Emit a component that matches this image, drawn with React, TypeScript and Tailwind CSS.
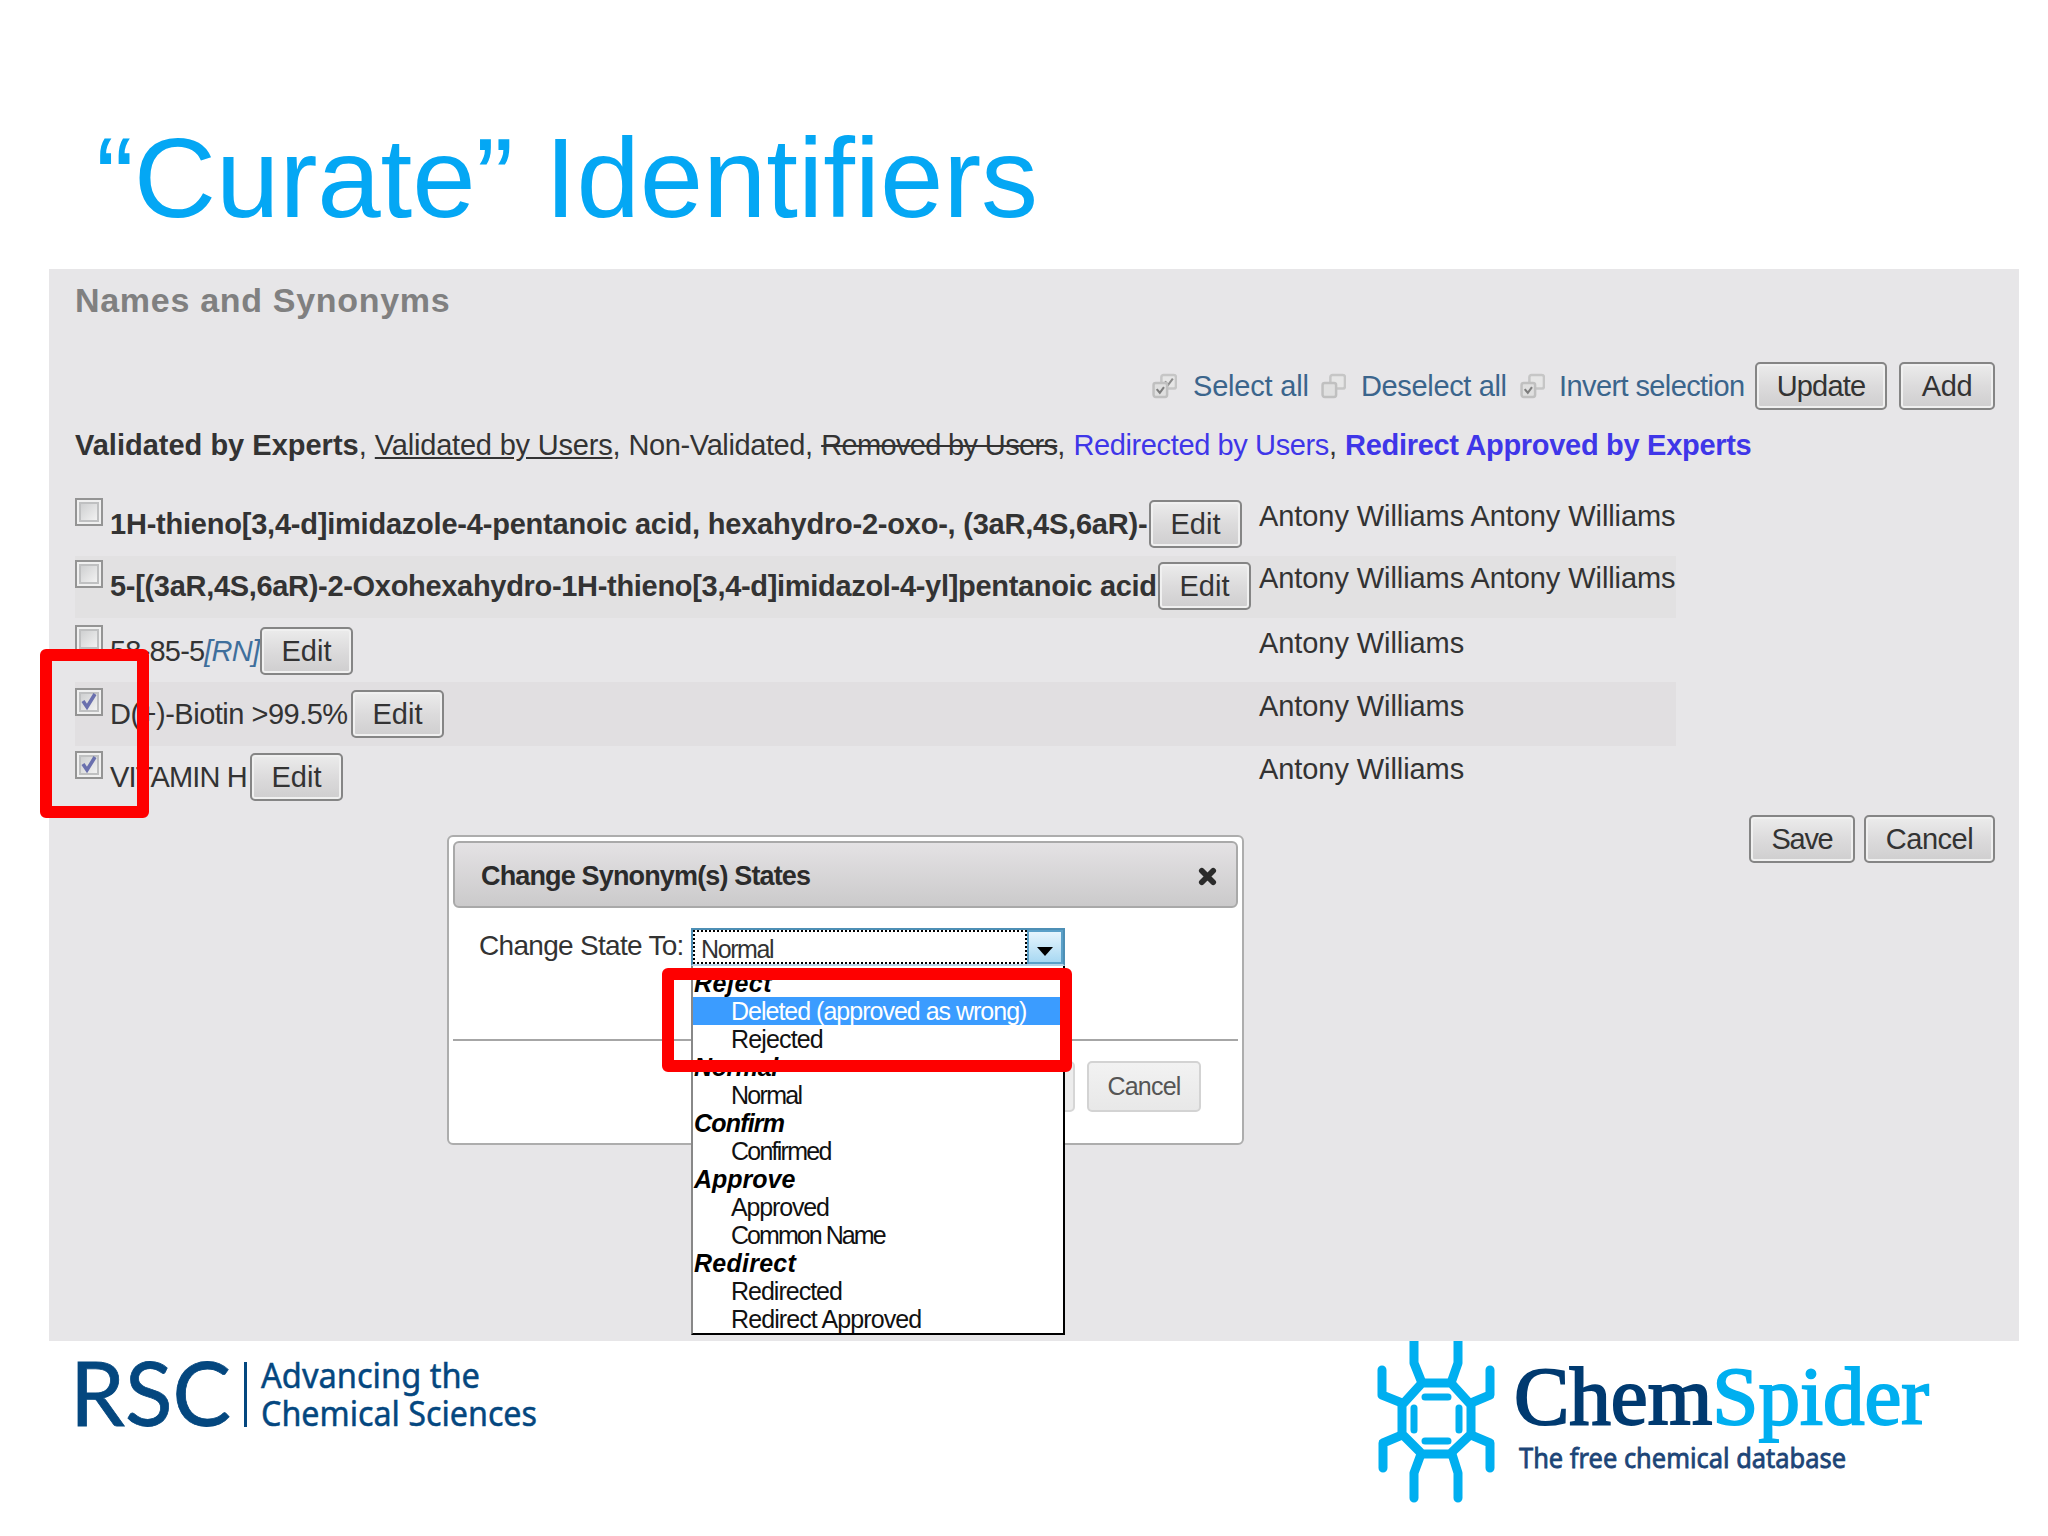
import React from "react";

const sans = "font-['Liberation_Sans',Arial,sans-serif]";

interface ButtonProps {
  label: string;
  className?: string;
}

function Button({ label, className = "" }: ButtonProps) {
  return (
    <button
      className={`h-[48px] shrink-0 rounded-[5px] border-2 border-[#858585] bg-linear-to-b from-[#ececec] via-[#dcdbdc] to-[#cfcecf] text-[29px] leading-[45px] text-[#333] shadow-[inset_0_0_0_2px_#f0f0f0] ${className}`}
    >
      {label}
    </button>
  );
}

function Checkbox({ checked }: { checked?: boolean }) {
  return (
    <span className="block h-[28px] w-[28px] shrink-0 border-2 border-[#949494] bg-[#f0f0f0] p-[2px]">
      <span className="block h-full w-full border-2 border-[#bfc0c1] bg-linear-to-br from-[#cfd0d1] to-[#f2f2f2]">
        {checked && (
          <svg viewBox="0 0 16 16" className="h-full w-full overflow-visible">
            <path d="M2 7 L6 13 L14 0" fill="none" stroke="#6a70ae" strokeWidth="3.6" />
          </svg>
        )}
      </span>
    </span>
  );
}

interface SelectIconProps {
  front?: boolean;
  back?: boolean;
}

function SelectIcon({ front, back }: SelectIconProps) {
  return (
    <svg viewBox="0 0 24 24" className="h-[26px] w-[25px] shrink-0">
      <rect x="9" y="1.5" width="14" height="13" rx="2" fill="#e6e6e6" stroke="#c6c6c6" strokeWidth="2.4" />
      {back && <path d="M12.5 7.5 L15.5 11 L20 5" fill="none" stroke="#8b8b8b" strokeWidth="2" />}
      <rect x="1.5" y="9" width="13" height="13.5" rx="2" fill="#e0e0e0" stroke="#c0c0c0" strokeWidth="2.4" />
      {front && <path d="M4.5 15 L7.5 18.5 L11.5 13" fill="none" stroke="#7d7d7d" strokeWidth="2" />}
    </svg>
  );
}

interface Synonym {
  name: React.ReactNode;
  owner: string;
  textClass: string;
  rowClass: string;
  checked?: boolean;
}

const synonyms: Synonym[] = [
  {
    name: "1H-thieno[3,4-d]imidazole-4-pentanoic acid, hexahydro-2-oxo-, (3aR,4S,6aR)-",
    owner: "Antony Williams Antony Williams",
    textClass: "w-[1039px] font-bold tracking-[-0.22px]",
    rowClass: "h-[63px] pt-[5px]",
  },
  {
    name: "5-[(3aR,4S,6aR)-2-Oxohexahydro-1H-thieno[3,4-d]imidazol-4-yl]pentanoic acid",
    owner: "Antony Williams Antony Williams",
    textClass: "w-[1048px] font-bold tracking-[-0.31px]",
    rowClass: "h-[62px] bg-[#e2e1e2] pt-[4px]",
  },
  {
    name: (
      <>
        58-85-5<i className="text-[#3f6f9c]">[RN]</i>
      </>
    ),
    owner: "Antony Williams",
    textClass: "w-[150px] tracking-[-0.8px]",
    rowClass: "h-[64px] pt-[7px]",
  },
  {
    name: "D(+)-Biotin >99.5%",
    owner: "Antony Williams",
    textClass: "w-[241px] tracking-[-0.5px]",
    rowClass: "h-[64px] bg-[#e1dfe1] pt-[6px]",
    checked: true,
  },
  {
    name: "VITAMIN H",
    owner: "Antony Williams",
    textClass: "w-[140px] tracking-[-0.85px]",
    rowClass: "h-[63px] pt-[5px]",
    checked: true,
  },
];

function SynonymRow({ name, owner, textClass, rowClass, checked }: Synonym) {
  return (
    <div className={`flex w-[1601px] ${rowClass}`}>
      <div className="flex w-[1184px] shrink-0">
        <Checkbox checked={checked} />
        <div className={`ml-[7px] shrink-0 pt-[8px] text-[29px] leading-[36px] whitespace-nowrap ${textClass}`}>{name}</div>
        <Button label="Edit" className="mt-[2px] w-[93px]" />
      </div>
      <div className="text-[29px] leading-[36px] tracking-[-0.08px] whitespace-nowrap">{owner}</div>
    </div>
  );
}

const options = [
  { label: "Reject", group: true, tracking: "tracking-[0.5px]" },
  { label: "Deleted (approved as wrong)", active: true, tracking: "tracking-[-1px]" },
  { label: "Rejected", tracking: "tracking-[-0.85px]" },
  { label: "Normal", group: true, tracking: "tracking-[-0.4px]" },
  { label: "Normal", tracking: "tracking-[-1.7px]" },
  { label: "Confirm", group: true, tracking: "tracking-[-0.8px]" },
  { label: "Confirmed", tracking: "tracking-[-1.75px]" },
  { label: "Approve", group: true, tracking: "tracking-[0px]" },
  { label: "Approved", tracking: "tracking-[-1.15px]" },
  { label: "Common Name", tracking: "tracking-[-1.95px]" },
  { label: "Redirect", group: true, tracking: "tracking-[0.25px]" },
  { label: "Redirected", tracking: "tracking-[-1px]" },
  { label: "Redirect Approved", tracking: "tracking-[-0.9px]" },
];

function StateOptions() {
  return (
    <div className="absolute top-[966px] left-[691px] h-[369px] w-[374px] border-r-2 border-b-2 border-l-2 border-black border-l-[#888] bg-white pt-[3px] text-[25px] leading-[28px] whitespace-nowrap text-[#111]">
      {options.map((option, i) => (
        <div
          key={i}
          className={`${option.tracking} ${
            option.group ? "pl-px font-bold text-black italic" : option.active ? "bg-[#3b9cff] pl-[38px] text-white" : "pl-[38px]"
          }`}
        >
          {option.label}
        </div>
      ))}
    </div>
  );
}

function ChangeStateDialog() {
  return (
    <div className="absolute top-[835px] left-[447px] flex h-[310px] w-[797px] flex-col rounded-[6px] border-2 border-[#adadad] bg-white p-[4px]">
      <div className="flex h-[67px] shrink-0 items-center justify-between rounded-[6px] border-2 border-[#a9a9a9] bg-linear-to-b from-[#e4e2e4] to-[#cbcacb] pt-[3px] pr-[19px] pl-[26px] text-[27px] font-bold tracking-[-0.85px] text-[#2b2b2b]">
        <span>Change Synonym(s) States</span>
        <svg viewBox="0 0 20 20" className="h-[19px] w-[19px]">
          <path d="M4 4 L16 16 M16 4 L4 16" stroke="#2b2b2b" strokeWidth="6" strokeLinecap="round" />
        </svg>
      </div>
      <div className="flex h-[133px] shrink-0 border-b-2 border-[#a6a6a6] pt-[20px] pl-[26px]">
        <span className="w-[212px] text-[28px] leading-[36px] tracking-[-0.7px] whitespace-nowrap">Change State To:</span>
        <div className="flex h-[38px] w-[374px] border-2 border-[#4d8fb5] border-b-[#b5d3e8]">
          <div className="flex-1 border-2 border-dotted border-black pl-[6px] text-[25px] leading-[34px] tracking-[-1.4px]">Normal</div>
          <div className="flex w-[36px] items-end justify-center border-2 border-[#5aa0c8] bg-linear-to-b from-[#e6f5fd] to-[#a8d8f2] pb-[6px]">
            <svg viewBox="0 0 16 9" className="h-[9px] w-[16px]">
              <path d="M0 0 H16 L8 9 Z" fill="#000" />
            </svg>
          </div>
        </div>
      </div>
      <div className="flex justify-end gap-[12px] pt-[20px] pr-[37px]">
        <button className="h-[51px] w-[110px] rounded-[5px] border-2 border-[#d6d6d6] bg-[#ededed]" />
        <button className="h-[51px] w-[114px] rounded-[5px] border-2 border-[#d3d3d3] bg-linear-to-b from-[#f2f2f2] to-[#e8e8e8] pt-px text-[25px] tracking-[-0.8px] text-[#555]">
          Cancel
        </button>
      </div>
    </div>
  );
}

function Footer() {
  return (
    <svg viewBox="0 0 2048 195" className="block h-[195px] w-[2048px] overflow-visible">
      <g fill="#04477f">
        <text x="70" y="85" textLength="161" lengthAdjust="spacingAndGlyphs" stroke="#04477f" strokeWidth="0.8" className="font-['Lato',sans-serif] text-[89px]">
          RSC
        </text>
        <rect x="244" y="21" width="3" height="65" />
        <g className="font-['Noto_Sans','Open_Sans',sans-serif] text-[35px]" stroke="#04477f" strokeWidth="0.5">
          <text x="261" y="47" textLength="219" lengthAdjust="spacingAndGlyphs">Advancing the</text>
          <text x="261" y="85" textLength="276" lengthAdjust="spacingAndGlyphs">Chemical Sciences</text>
        </g>
      </g>
      <g fill="none" stroke="#00aff0" strokeWidth="9" strokeLinejoin="round">
        <path d="M1422 42 H1451 L1471 64 V93 L1450 113 H1422 L1402 93 V64 Z" />
        <path d="M1422 42 L1414 22 V0 M1451 42 L1458 22 V0" />
        <path
          d="M1402 62 L1382 54 V29 M1471 62 L1490 54 V29 M1402 94 L1383 102 V127 M1471 94 L1490 102 V127 M1421 113 L1414 132 V157 M1452 113 L1458 132 V157"
          strokeLinecap="round"
        />
        <path d="M1425 56 H1448 M1425 100 H1448 M1414 67 V89 M1459 67 V89" strokeWidth="7" strokeLinecap="round" />
      </g>
      <text x="1514" y="83" textLength="415" lengthAdjust="spacingAndGlyphs" strokeWidth="2" className="font-['Liberation_Serif',serif] text-[82px]">
        <tspan fill="#003a70" stroke="#003a70">Chem</tspan>
        <tspan fill="#00aff0" stroke="#00aff0">Spider</tspan>
      </text>
      <text x="1519" y="127" textLength="327" lengthAdjust="spacingAndGlyphs" fill="#1d4577" stroke="#1d4577" strokeWidth="0.8" className="font-['Noto_Sans','Open_Sans',sans-serif] text-[28px]">
        The free chemical database
      </text>
    </svg>
  );
}

export default function App() {
  return (
    <div className={`relative h-[1536px] w-[2048px] overflow-hidden bg-white text-[#333] ${sans}`}>
      <h1 className="h-[269px] pt-[112px] pl-[96px] text-[114px] leading-[131px] tracking-[-0.1px] whitespace-nowrap text-[#04a7f4]">“Curate” Identifiers</h1>

      <main className="ml-[49px] h-[1072px] w-[1970px] bg-[#e7e6e8] pt-[10px] pr-[24px] pl-[26px]">
        <h2 className="h-[83px] text-[34px] leading-[42px] font-bold tracking-[0.7px] text-[#808080]">Names and Synonyms</h2>

        <div className="flex h-[48px] items-center justify-end text-[29px] whitespace-nowrap text-[#3b658c]">
          <SelectIcon front back />
          <span className="ml-[16px] w-[128px] pt-[2px] tracking-[-0.2px]">Select all</span>
          <SelectIcon />
          <span className="ml-[15px] w-[159px] pt-[2px] tracking-[-0.35px]">Deselect all</span>
          <SelectIcon front />
          <span className="ml-[14px] w-[196px] pt-[2px] tracking-[-0.6px]">Invert selection</span>
          <Button label="Update" className="w-[132px] tracking-[-0.8px]" />
          <Button label="Add" className="ml-[12px] w-[96px] tracking-[-0.4px]" />
        </div>

        <p className="mt-[17px] h-[66px] text-[29px] leading-[36px] whitespace-nowrap">
          <b>Validated by Experts</b>, <span className="tracking-[-0.2px] underline">Validated by Users</span>,{" "}
          <span className="tracking-[-0.4px]">Non-Validated</span>, <s className="tracking-[-0.65px]">Removed by Users</s>,{" "}
          <span className="tracking-[-0.38px] text-[#3f36e8]">Redirected by Users</span>,{" "}
          <b className="tracking-[-0.3px] text-[#3f36e8]">Redirect Approved by Experts</b>
        </p>

        {synonyms.map((synonym, i) => (
          <SynonymRow key={i} {...synonym} />
        ))}

        <div className="mt-[6px] flex justify-end gap-[9px]">
          <Button label="Save" className="w-[106px] tracking-[-1.3px]" />
          <Button label="Cancel" className="w-[131px] tracking-[-0.5px]" />
        </div>
      </main>

      <Footer />

      <ChangeStateDialog />
      <StateOptions />

      {/* Highlights */}
      <div className="absolute top-[649px] left-[40px] h-[169px] w-[109px] rounded-[6px] border-[12px] border-[#fe0000]" />
      <div className="absolute top-[968px] left-[662px] h-[104px] w-[410px] rounded-[6px] border-[12px] border-[#fe0000]" />
    </div>
  );
}
